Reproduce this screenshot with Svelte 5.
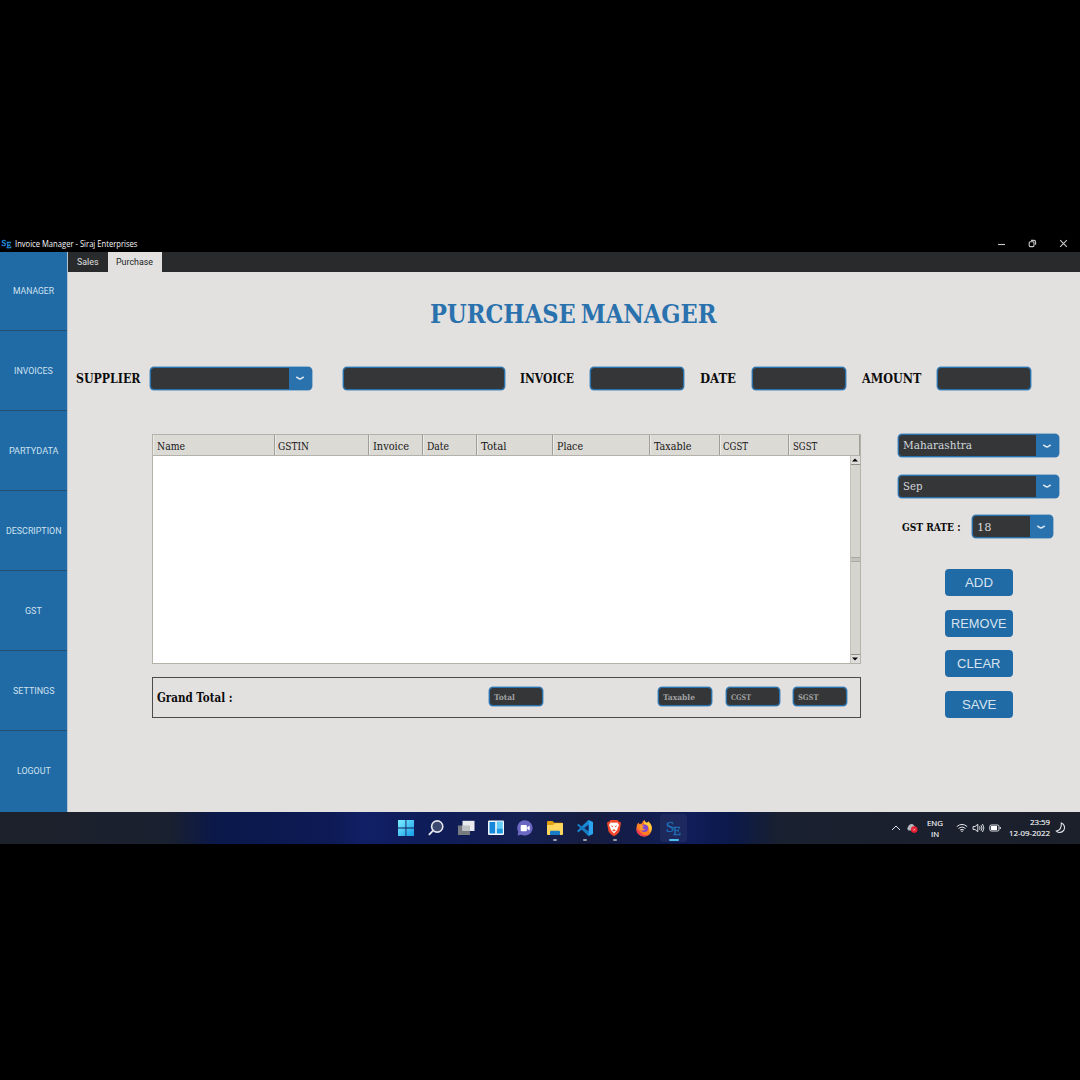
<script>
  const nav = [
    ['MANAGER', 41], ['INVOICES', 38.7], ['PARTYDATA', 49.5], ['DESCRIPTION', 55.5],
    ['GST', 16.8], ['SETTINGS', 41.5], ['LOGOUT', 33.7]
  ];
  const columns = [
    ['Name', 28], ['GSTIN', 31], ['Invoice', 36], ['Date', 22], ['Total', 25.5],
    ['Place', 26], ['Taxable', 37.5], ['CGST', 25], ['SGST', 24.2]
  ];
  const totals = [['Total', 21], ['Taxable', 32], ['CGST', 20], ['SGST', 20.5]];
  const actions = [['ADD', 28], ['REMOVE', 55.5], ['CLEAR', 43.5], ['SAVE', 34.5]];
</script>

<!-- Single line of text fitted to a given width; the box is as tall as the capitals -->
{#snippet line(text, width, cap, cls)}
  <svg class="line {cls}" {width} height={cap}><text x="0" y={cap} textLength={width} lengthAdjust="spacingAndGlyphs">{text}</text></svg>
{/snippet}

{#snippet arrow()}
  <span class="arrow"><svg width="10" height="6" viewBox="0 0 10 6"><path d="M1.7 2.2Q2.6 2.4 3.2 3.2Q5 4.6 6.8 3.2Q7.4 2.4 8.3 2.2" /></svg></span>
{/snippet}

<div class="screen">
  <header class="titlebar">
    <svg class="mini" width="12" height="10" viewBox="0 0 24 20"><text x="1" y="13" font-size="17">S</text><text x="11" y="18" font-size="16">E</text></svg>
    {@render line('Invoice Manager - Siraj Enterprises', 122.5, 6.2, 'seg')}
    <div class="wincontrols">
      <svg width="9" height="9" viewBox="0 0 9 9"><path d="M1 5.5H8" /></svg>
      <svg width="9" height="9" viewBox="0 0 9 9"><rect x="1.2" y="2.8" width="4.8" height="4.8" rx="1" /><path d="M3 1.4H6Q7.6 1.4 7.6 3V5.8" /></svg>
      <svg width="9" height="9" viewBox="0 0 9 9"><path d="M1.2 1.2L7.8 7.8M7.8 1.2L1.2 7.8" /></svg>
    </div>
  </header>

  <div class="app">
    <nav>
      {#each nav as [name, w]}
        <div class="navitem">{@render line(name, w, 6.3, 'rob')}</div>
      {/each}
    </nav>
    <main>
      <div class="tabs">
        <div class="tab">{@render line('Sales', 21.5, 6.5, 'rob tabtext')}</div>
        <div class="tab active">{@render line('Purchase', 37, 6.5, 'rob tabtext')}</div>
      </div>
      <h1>{@render line('PURCHASE MANAGER', 286.5, 19.5, 'heading')}</h1>

      <div class="form">
        {@render line('SUPPLIER', 64.5, 9.7, 'label')}
        <div class="field combo">{@render arrow()}</div>
        <div class="field wide"></div>
        {@render line('INVOICE', 54, 9.7, 'label')}
        <div class="field"></div>
        {@render line('DATE', 36, 9.7, 'label')}
        <div class="field"></div>
        {@render line('AMOUNT', 59.3, 9.7, 'label')}
        <div class="field"></div>
      </div>

      <div class="lower">
        <section>
          <div class="table">
            <div class="thead">
              {#each columns as [name, w]}
                <div class="th">{@render line(name, w, 8.2, 'cell')}</div>
              {/each}
            </div>
            <div class="tbody">
              <div class="scroll">
                <span class="sbtn"><svg width="6" height="4" viewBox="0 0 6 4"><path d="M0 3.6L3 .4L6 3.6Z" /></svg></span>
                <span class="grip"></span>
                <span class="sbtn down"><svg width="6" height="4" viewBox="0 0 6 4"><path d="M0 .4L3 3.6L6 .4Z" /></svg></span>
              </div>
            </div>
          </div>
          <div class="grand">
            {@render line('Grand Total :', 75.5, 8.6, 'label gt')}
            {#each totals as [name, w]}
              <div class="field small">{@render line(name, w, 5.8, 'ph')}</div>
            {/each}
          </div>
        </section>

        <aside>
          <div class="field combo">{@render line('Maharashtra', 69, 8.4, 'value')}{@render arrow()}</div>
          <div class="field combo second">{@render line('Sep', 19.5, 8.4, 'value')}{@render arrow()}</div>
          <div class="rate">
            {@render line('GST RATE :', 58.5, 8, 'label rt')}
            <div class="field combo">{@render line('18', 14.5, 8.8, 'value')}{@render arrow()}</div>
          </div>
          <div class="actions">
            {#each actions as [name, w]}
              <div class="action">{@render line(name, w, 10, 'btn')}</div>
            {/each}
          </div>
        </aside>
      </div>
    </main>
  </div>

  <footer>
    <div class="dock">
      <div class="ic">
        <svg width="18" height="18" viewBox="0 0 18 18"><defs><linearGradient id="win" x1="0" y1="0" x2="1" y2="1"><stop offset="0" stop-color="#7df0ff" /><stop offset="1" stop-color="#159be8" /></linearGradient></defs><path fill="url(#win)" d="M1 1H8.5V8.5H1ZM9.4 1H17V8.5H9.4ZM1 9.4H8.5V17H1ZM9.4 9.4H17V17H9.4Z" /></svg>
      </div>
      <div class="ic">
        <svg width="18" height="18" viewBox="0 0 18 18"><circle cx="10.2" cy="7.5" r="5.6" fill="#3b486f" stroke="#e4e6ec" stroke-width="1.6" /><path d="M6 11.7L2.4 15.4" stroke="#e4e6ec" stroke-width="1.9" stroke-linecap="round" /></svg>
      </div>
      <div class="ic">
        <svg width="18" height="18" viewBox="0 0 18 18"><path d="M1 6.5H13V16H1Z" fill="#777a7e" /><path d="M5.5 1.8H17.5V12H5.5Z" fill="#e9eaed" /><path d="M5.5 6.5H13V12H5.5Z" fill="#bfc1c5" /></svg>
      </div>
      <div class="ic">
        <svg width="18" height="18" viewBox="0 0 18 18"><rect x="1" y="1.5" width="16" height="14.5" rx="1" fill="#f2f7fb" /><path d="M2.5 3H8.2V14.5H2.5Z" fill="#1688dc" /><path d="M9.8 2.5H15.8V9.4H9.8Z" fill="#63cdf8" /><path d="M9.8 9.4H15.8V14.5H9.8Z" fill="#1a9ae5" /></svg>
      </div>
      <div class="ic">
        <svg width="18" height="18" viewBox="0 0 18 18"><path d="M9 1.3a7.6 7.6 0 1 1-3.4 14.4L1.5 16.6L2.3 12.7A7.6 7.6 0 0 1 9 1.3Z" fill="#6a68c2" /><rect x="4.7" y="6" width="6.2" height="6.2" rx="1" fill="#fff" /><path d="M11.3 8.3L13.7 6.6V11.6L11.3 10Z" fill="#fff" /></svg>
      </div>
      <div class="ic run">
        <svg width="18" height="18" viewBox="0 0 18 18"><path d="M1 3Q1 2 2 2H6.5L8.3 3.8H16Q17 3.8 17 4.8V8H1Z" fill="#e2a10f" /><path d="M1 6H7L8.5 4.3H17V15Q17 16 16 16H2Q1 16 1 15Z" fill="#ffd75e" /><path d="M4 16V13Q4 11.8 5.2 11.8H12.8Q14 11.8 14 13V16Z" fill="#177bc5" /></svg>
      </div>
      <div class="ic run">
        <svg width="18" height="18" viewBox="0 0 18 18"><path d="M12.6 1L17 3.1V14.9L12.6 17L4.4 9Z" fill="#2aa4ee" /><path d="M12.8 5L2.4 13.3L1 12L12.6 1Z" fill="#1787d1" /><path d="M12.8 13L2.4 4.7L1 6L12.6 17Z" fill="#147bc0" /><path d="M12.7 5.4V12.6L8 9Z" fill="#14225b" /></svg>
      </div>
      <div class="ic run">
        <svg width="18" height="18" viewBox="0 0 18 18"><path d="M5.6 1H12.4L14 2.7L16 3.6L15.6 6L14.6 12Q13.8 14.4 9 17.3Q4.2 14.4 3.4 12L2.4 6L2 3.6L4 2.7Z" fill="#f5472b" /><path d="M9 3.8L12.3 3.4L14 6L12.7 9.2L12 11.2L9 14.6L6 11.2L5.3 9.2L4 6L5.7 3.4Z" fill="#fff" /><path d="M5.6 6.3L8 7.2L7.6 8.6ZM12.4 6.3L10 7.2L10.4 8.6ZM7.1 11.2L9 10.2L10.9 11.2L9 12.4Z" fill="#f5472b" /></svg>
      </div>
      <div class="ic">
        <svg width="18" height="18" viewBox="0 0 18 18"><path d="M3.3 3.5L4.3 5L7 4.4Q7.4 2 9.5 1Q9.7 2.8 12 4L13.3 2.4Q17.2 5.8 16.8 10A7.7 7.7 0 0 1 1.4 9.7Q1.2 6 3.3 3.5Z" fill="#ff7e24" /><path d="M9.5 1Q9.7 2.8 12 4L13.3 2.4Q17.2 5.8 16.8 10Q16 13 14.5 13.4Q15 7 9 5Z" fill="#ffc93a" /><path d="M1.4 9A7.7 7.7 0 0 0 13.5 16Q7 17 5 12.5Z" fill="#f33b56" /><circle cx="9.4" cy="9.2" r="3.7" fill="#8147cf" /><path d="M4.3 6.4Q7.2 5.4 9.2 7.6Q7.4 8 7.3 9.2Q8.6 10.4 10.4 9.8Q9 12 6.8 11.4Q4.6 10 4.3 6.4Z" fill="#ff9b2b" /></svg>
      </div>
      <div class="ic current">
        <svg class="se" width="20" height="18" viewBox="0 0 20 18"><text x="2" y="12.5" font-size="15">S</text><text x="9" y="15.8" font-size="13">E</text></svg>
      </div>
    </div>
    <div class="tray">
      <svg width="10" height="8" viewBox="0 0 10 8"><path d="M1 6L5 2L9 6" /></svg>
      <svg class="cloud" width="12" height="10" viewBox="0 0 12 10"><path d="M2.6 7.5A2.3 2.3 0 0 1 2.2 3.7A3.2 3.2 0 0 1 8 2.5L10 5V7.5Z" fill="#b7bbc1" stroke="none" /><circle cx="8.2" cy="6.6" r="3.3" fill="#e81f30" stroke="none" /><path d="M7.3 5.7L9.1 7.5M9.1 5.7L7.3 7.5" stroke-width=".6" /></svg>
      <div class="lang">{@render line('ENG', 16, 5.8, 'seg')}{@render line('IN', 8, 5.8, 'seg')}</div>
      <svg width="12" height="10" viewBox="0 0 12 10"><path d="M.8 3.6Q6-.8 11.2 3.6M2.5 5.4Q6 2.4 9.5 5.4M4.1 7.1Q6 5.5 7.9 7.1" /><circle cx="6" cy="8.2" r=".8" fill="#e8e9ec" stroke="none" /></svg>
      <svg class="vol" width="13" height="10" viewBox="0 0 13 10"><path d="M1 3.6H3L5.8 1.2V8.8L3 6.4H1ZM7.5 3.4Q8.7 5 7.5 6.6M9 2.2Q11 5 9 7.8M10.5 1Q13.3 5 10.5 9" /></svg>
      <svg class="bat" width="12" height="8" viewBox="0 0 12 8"><rect x=".8" y="1" width="9.2" height="6" rx="1.4" /><path d="M2 2H8V6H2Z" fill="#fff" stroke="none" /><path d="M11.3 3V5" /></svg>
      <div class="clock">{@render line('23:59', 20, 5.8, 'seg')}{@render line('12-09-2022', 41, 5.8, 'seg')}</div>
      <svg class="moon" width="12" height="12" viewBox="0 0 11 11"><path d="M5.8 1A4.4 4.4 0 1 1 1.3 8.3Q6.2 7.6 5.8 1Z" /></svg>
    </div>
  </footer>
</div>

<style>
  :global(body) { background: #000; }
  .screen { width: 1080px; height: 1080px; background: #000; padding-top: 236px; box-sizing: border-box; overflow: hidden; }
  .line { display: block; overflow: visible; flex: none; font-family: "DejaVu Serif Condensed", "DejaVu Serif", serif; }
  .seg { font-family: "Open Sans", sans-serif; font-size: 8.4px; fill: #f8f8f8; }
  .rob { font-family: Roboto, sans-serif; font-size: 8.5px; fill: #cfe2f0; }
  .tabtext { font-size: 8.9px; fill: #e0e0e0; }
  .active .tabtext { fill: #202124; }
  .heading { font-size: 26.4px; font-weight: 700; fill: #2a72ae; word-spacing: -3px; }
  .label { font-size: 13px; font-weight: 700; fill: #0c0c0c; }
  .gt { font-size: 12px; }
  .rt { font-size: 11px; }
  .cell { font-size: 11px; fill: #161616; }
  .value { font-size: 11.8px; fill: #d3d8dc; }
  .ph { font-size: 7.8px; font-weight: 700; fill: #a0a1a1; }
  .btn { font-family: "Liberation Sans", sans-serif; font-size: 13.6px; fill: #d6e3ee; }

  .titlebar { height: 16px; display: flex; align-items: center; box-sizing: border-box; padding-left: 1px; }
  .mini { margin-right: 2px; font-family: "Liberation Serif", serif; fill: #2496e0; stroke: #2496e0; stroke-width: 0.7; }
  .wincontrols { margin: 0 12.5px 0 auto; display: flex; gap: 22px; padding-bottom: 2px; }
  .wincontrols svg { fill: none; stroke: #c9c9c9; stroke-width: 1.1; }

  .app { display: flex; height: 559.5px; }
  nav { width: 67px; background: #206aa5; border-right: 1px solid #b5c4d0; }
  .navitem { height: 80px; box-sizing: border-box; border-bottom: 1px solid #254d6e; padding-top: 1.2px; display: flex; align-items: center; justify-content: center; }
  .navitem:first-child { height: 79px; padding-top: 0; }
  .navitem:last-child { border: 0; }
  main { flex: 1; background: #e3e1e0; }
  .tabs { height: 20px; display: flex; background: #292a2c; }
  .tab { width: 40px; box-sizing: border-box; padding: 0 1px 1.6px 0; display: flex; align-items: center; justify-content: center; }
  .active { width: 54px; background: #e3e1e0; }
  h1 { margin: 31px 0 0; height: 20px; padding-right: 1.5px; display: flex; justify-content: center; }
  .form { margin-top: 43.5px; height: 23px; padding-left: 8px; display: grid; align-items: center; grid-template-columns: 74px 193px 177px 70px 110px 52px 110px 75px 94px; }
  .field { width: 94px; height: 23px; box-sizing: border-box; border: 1px solid #2a72ae; box-shadow: 0 0 0 0.5px #4b8abd; border-radius: 4px; background: #343638; display: flex; align-items: center; }
  .wide, .combo { width: 161.5px; }
  .combo { padding-left: 4px; }
  .arrow { margin-left: auto; width: 22px; align-self: stretch; background: #2a72ae; display: flex; align-items: center; justify-content: center; }
  .arrow path { fill: none; stroke: #dbe6ef; stroke-width: 1.6; stroke-linecap: round; }

  .lower { margin-top: 44.5px; display: flex; padding-left: 84px; }
  section { width: 708.5px; }
  .table { height: 229.5px; box-sizing: border-box; border: 1px solid #b5b2aa; background: #fff; display: flex; flex-direction: column; }
  .thead { height: 21px; display: grid; grid-template-columns: 121.5px 94.5px 54.2px 54.2px 76px 97px 69.5px 69.5px 1fr; background: #dcdad5; border-bottom: 1px solid #b3b1ab; box-sizing: border-box; }
  .th { border-right: 1px solid #a09e98; border-left: 1px solid #eceae6; display: flex; align-items: center; padding: 2px 0 0 2.5px; }
  .tbody { flex: 1; display: flex; justify-content: flex-end; }
  .scroll { width: 9px; background: #d6d4cf; border-left: 1px solid #c5c2bb; display: flex; flex-direction: column; justify-content: space-between; align-items: stretch; }
  .sbtn { height: 9px; box-sizing: border-box; border-bottom: 1px solid #8f8d87; background: #e0deda; display: flex; align-items: center; justify-content: center; }
  .sbtn.down { border-bottom: 0; border-top: 1px solid #8f8d87; }
  .grip { height: 5px; border-top: 1px solid #aaa8a2; border-bottom: 1px solid #aaa8a2; box-sizing: border-box; background: #c5c3bd; }
  .grand { margin-top: 13.5px; height: 40.5px; box-sizing: border-box; border: 1px solid #4b4b4b; display: grid; align-items: center; padding-left: 4px; grid-template-columns: 332px 169px 67.5px 67.5px 54px; }
  .gt { margin-top: 1px; }
  .small { width: 54px; height: 19px; padding-left: 4px; margin-bottom: 1px; }

  aside { margin-left: 37px; width: 162px; }
  .second { margin-top: 17.5px; }
  .rate { margin-top: 17.5px; display: flex; align-items: center; padding-left: 4.5px; gap: 11.5px; }
  .rate .combo { width: 80.5px; }
  .actions { margin: 31px 0 0 47.5px; display: flex; flex-direction: column; gap: 13.5px; }
  .action { width: 67.5px; height: 27px; box-sizing: border-box; padding-bottom: 1px; border-radius: 4px; background: #206aa5; display: flex; align-items: center; justify-content: center; }

  footer { height: 32.5px; display: flex; align-items: center; background: linear-gradient(90deg, #1d212b 0, #19202f 170px, #0b184a 215px, #0d1a55 330px, #111f66 365px, #0e1c58 430px, #152052 530px, #161d40 590px, #101d59 690px, #0b194b 730px, #19202f 780px, #1b202b 100%); }
  .dock { padding-left: 391.5px; display: flex; }
  .ic { width: 29.72px; height: 28px; display: flex; align-items: center; justify-content: center; position: relative; }
  .ic svg { display: block; }
  .run::after, .current::after { content: ""; position: absolute; bottom: 0.5px; left: 13px; width: 4px; height: 2px; border-radius: 1px; background: #9b9ead; }
  .current::before { content: ""; position: absolute; left: 1.5px; top: 0; width: 27px; height: 28px; border-radius: 3px; background: #ffffff0d; }
  .current::after { left: 10px; width: 10px; background: #4dbdf0; }
  .se { font-family: "Liberation Serif", serif; fill: #1d70b4; stroke: #1d70b4; stroke-width: 0.3; position: relative; }
  .tray { margin-left: auto; padding-right: 13px; display: flex; align-items: center; }
  .tray svg { fill: none; stroke: #dfe1e5; }
  .tray .seg { stroke: #f0f0f2; stroke-width: 0.15; fill: #f8f8fa; font-size: 8px; }
  .cloud { margin-left: 5px; }
  .lang { width: 17px; margin: 1px 12px 0 9px; display: flex; flex-direction: column; align-items: center; gap: 5px; }
  .vol { margin-left: 4px; }
  .bat { margin-left: 4px; }
  .clock { display: flex; flex-direction: column; align-items: flex-end; gap: 5px; margin: 0 5px 0 8.5px; }
</style>
